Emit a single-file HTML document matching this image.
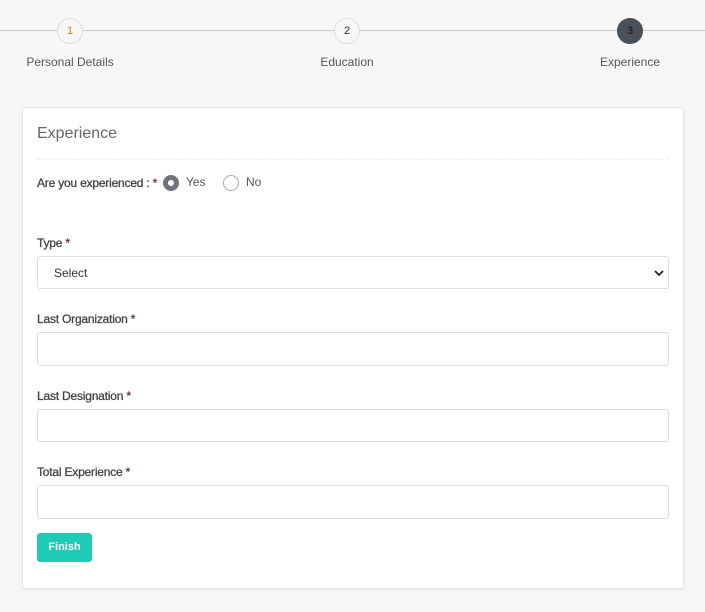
<!DOCTYPE html>
<html><head><style>
*{box-sizing:border-box;margin:0;padding:0}
body{width:705px;height:612px;background:#f7f7f7;font-family:"Liberation Sans",sans-serif;color:#555;position:relative;overflow:hidden}
.line{position:absolute;top:30px;left:0;width:705px;height:1px;background:#ccc}
.c{position:absolute;width:26px;height:26px;border-radius:50%;border:1px solid #ddd;background:#f7f7f7;font-size:11px;text-align:center;line-height:24px;color:#333;top:18px}
.l{position:absolute;top:55px;font-size:12px;color:#555;transform:translateX(-50%);white-space:nowrap}
.card{position:absolute;left:22px;top:107px;width:662px;height:482px;background:#fff;border:1px solid #e6e6e6;border-radius:3px;box-shadow:0 1px 2px rgba(0,0,0,.08)}
.t{position:absolute;left:14px;top:17px;font-size:16px;color:#666}
.d{position:absolute;left:14px;top:51px;width:632px;border-top:1px dashed #eee}
.lab{position:absolute;left:14px;font-size:12px;color:#444;letter-spacing:-.2px;-webkit-text-stroke:.3px #444}
.lab b{color:#a0155a;font-weight:normal}
.in{position:absolute;left:14px;width:632px;height:34px;border:1px solid #ddd;border-radius:3px}
.btn{position:absolute;left:14px;top:425px;width:55px;height:29px;background:#1fcbb5;border-radius:3px;color:#fff;font-size:11px;font-weight:bold;text-align:center;line-height:29px}
.r{position:absolute;top:67px;width:16px;height:16px;border-radius:50%}
</style></head><body>
<div class="line"></div>
<div class="c" style="left:57px;color:#b8860b">1</div>
<div class="c" style="left:334px">2</div>
<div class="c" style="left:617px;background:#495057;border-color:#495057;color:#111">3</div>
<div class="l" style="left:70px">Personal Details</div>
<div class="l" style="left:347px">Education</div>
<div class="l" style="left:630px">Experience</div>
<div class="card">
<div class="t">Experience</div>
<div class="d"></div>
<div class="lab" style="top:68px">Are you experienced : <b>*</b></div>
<div class="r" style="left:140px;background:#6c757d"><div style="position:absolute;left:5px;top:5px;width:6px;height:6px;border-radius:50%;background:#fff"></div></div>
<div style="position:absolute;left:163px;top:67px;font-size:12px">Yes</div>
<div class="r" style="left:200px;border:1px solid #aaa"></div>
<div style="position:absolute;left:223px;top:67px;font-size:12px">No</div>
<div class="lab" style="top:128px">Type <b>*</b></div>
<div class="in" style="top:148px;height:33px"><span style="position:absolute;left:16px;top:9px;font-size:12px;color:#333">Select</span>
<svg style="position:absolute;right:4px;top:11px" width="10" height="10" viewBox="0 0 10 10"><path d="M1 3l4 4 4-4" stroke="#222" stroke-width="1.8" fill="none"/></svg></div>
<div class="lab" style="top:204px">Last Organization <b>*</b></div>
<div class="in" style="top:224px"></div>
<div class="lab" style="top:281px">Last Designation <b>*</b></div>
<div class="in" style="top:301px;height:33px"></div>
<div class="lab" style="top:357px">Total Experience <b>*</b></div>
<div class="in" style="top:377px"></div>
<div class="btn">Finish</div>
</div>
</body></html>
